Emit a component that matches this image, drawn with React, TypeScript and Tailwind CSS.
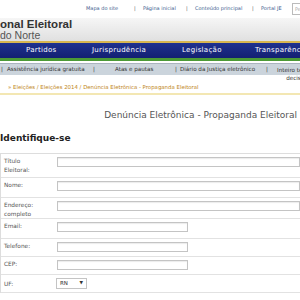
import React from "react";

const topLinks = [
  { t: "Mapa do site", w: "w-[48px]" },
  { t: "|", w: "w-[9px]" },
  { t: "Página inicial", w: "w-[43px]" },
  { t: "|", w: "w-[9px]" },
  { t: "Conteúdo principal", w: "w-[57px]" },
  { t: "|", w: "w-[9px]" },
  { t: "Portal JE", w: "w-[31px]" },
];

const rows = [
  { label: ["Título", "Eleitoral:"], width: "w-[250px]", h: "h-[24px]" },
  { label: ["Nome:"], width: "w-[250px]", h: "h-[20px]" },
  { label: ["Endereço:", "completo"], width: "w-[250px]", h: "h-[21px]" },
  { label: ["Email:"], width: "w-[131px]", h: "h-[20px]" },
  { label: ["Telefone:"], width: "w-[131px]", h: "h-[18px]" },
  { label: ["CEP:"], width: "w-[131px]", h: "h-[18px]" },
];

export default function App() {
  return (
    <div className="w-[300px] h-[300px] overflow-hidden bg-white font-['DejaVu_Sans',sans-serif]">
      {/* top links */}
      <div className="h-[18px] flex items-center pl-[86px] text-[5px] text-[#3b5b8c] whitespace-nowrap">
        {topLinks.map((l, i) => (
          <span key={i} className={`${l.w} shrink-0 ${l.t === "|" ? "text-[#555]" : ""}`}>
            {l.t}
          </span>
        ))}
        <div className="h-[12px] w-[40px] shrink-0 border border-[#bbb] bg-white text-[#aaa] text-[5px] pl-[2px] leading-[11px]">
          Pesquisar
        </div>
      </div>

      {/* header */}
      <div className="h-[23px] bg-gradient-to-b from-[#f6f6f6] to-[#e0e0e0] font-['Liberation_Sans',sans-serif]">
        <div className="text-[11.5px] leading-[12px] font-bold text-[#333]">onal Eleitoral</div>
        <div className="text-[10.5px] leading-[11px] text-[#555]">do Norte</div>
      </div>
      <div className="h-[2px] bg-[#d8b651]" />

      {/* main nav */}
      <div className="h-[15px] bg-gradient-to-b from-[#1f3190] to-[#132072] flex items-center text-[7px] tracking-[0.3px] text-white whitespace-nowrap">
        <span className="ml-[26px] w-[66px] shrink-0">Partidos</span>
        <span className="w-[90px] shrink-0">Jurisprudência</span>
        <span className="w-[73px] shrink-0">Legislação</span>
        <span className="shrink-0">Transparência</span>
      </div>
      <div className="h-[3px] bg-[#4c9a36]" />
      <div className="h-[2px] bg-white" />

      {/* secondary nav */}
      <div className="h-[12px] bg-[#cbd4dc] border-t border-[#aab4be] flex items-start text-[5.6px] text-[#333] whitespace-nowrap leading-[11px]">
        <span className="ml-[1px] w-[6px] shrink-0">|</span>
        <span className="w-[86px] shrink-0">Assistência jurídica gratuita</span>
        <span className="w-[22px] shrink-0">|</span>
        <span className="w-[60px] shrink-0">Atas e pautas</span>
        <span className="w-[5px] shrink-0">|</span>
        <span className="w-[86px] shrink-0">Diário da Justiça eletrônico</span>
        <span className="w-[11px] shrink-0">|</span>
        <span className="shrink-0 text-center leading-[8px] pt-[2px]">
          Inteiro teor das
          <br />
          decisões
        </span>
      </div>

      {/* breadcrumb */}
      <div className="mt-[8px] pl-[8px] pb-[2px] border-b-2 border-[#f3e7b3] text-[5.4px] text-[#c0861a] whitespace-nowrap">
        » Eleições / Eleições 2014 / Denúncia Eletrônica - Propaganda Eleitoral
      </div>

      {/* title */}
      <div className="mt-[14px] pr-[3px] text-right text-[9px] text-[#555]">
        Denúncia Eletrônica - Propaganda Eleitoral
      </div>
      <div className="mt-[9px] text-[9px] font-bold text-[#222] whitespace-nowrap">Identifique-se</div>

      {/* form */}
      <div className="mt-[8px] border-t border-l border-[#ddd] text-[5.8px] text-[#555]">
        {rows.map((r) => (
          <div key={r.label[0]} className={`${r.h} flex border-b border-[#e2e2e2]`}>
            <div className="w-[56px] shrink-0 pl-[3px] pt-[3px] leading-[9px]">
              {r.label.map((t) => (
                <div key={t}>{t}</div>
              ))}
            </div>
            <div className={`${r.width} h-[10px] mt-[3px] border border-[#c4c4c4] bg-white shadow-[inset_0_1px_1px_rgba(0,0,0,0.08)]`} />
          </div>
        ))}
        <div className="h-[18px] flex border-b border-[#e2e2e2]">
          <div className="w-[55px] shrink-0 pl-[3px] pt-[5px] leading-[9px]">UF:</div>
          <div className="mt-[3px] h-[11px] w-[31px] border border-[#c4c4c4] bg-white flex items-center justify-between px-[3px] text-[5.5px] text-[#333]">
            <span>RN</span>
            <span className="text-[4.5px]">▼</span>
          </div>
        </div>
      </div>
    </div>
  );
}
